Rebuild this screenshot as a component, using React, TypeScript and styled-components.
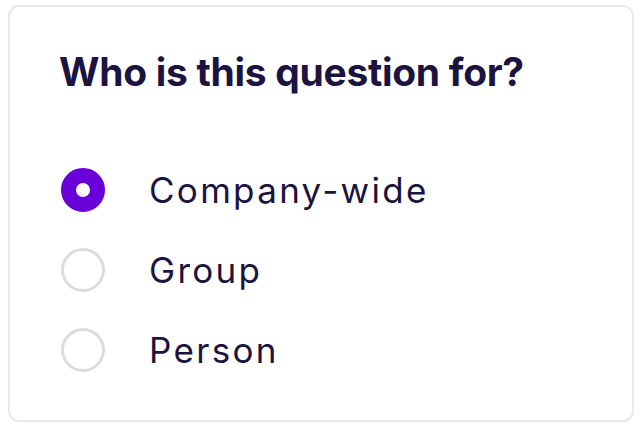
import React from 'react';
import styled, { createGlobalStyle } from 'styled-components';

const Global = createGlobalStyle`
  html, body { margin: 0; padding: 0; background: #fff; }
  body { font-family: 'Inter', 'Noto Sans', sans-serif; }
`;

const Page = styled.div`
  padding: 5px 8px 0 8px;
`;

const Card = styled.div`
  box-sizing: border-box;
  width: 626px; height: 417px;
  border: 2px solid #e9e9ec; border-radius: 11px;
  padding: 41px 0 0 51px;
  display: flex; flex-direction: column;
`;

const Title = styled.h2`
  margin: 0 0 72px -2px;
  font-size: 39px; line-height: 48px; font-weight: 700;
  color: #1b1340; letter-spacing: -0.3px;
`;

const List = styled.div`
  display: flex; flex-direction: column; gap: 36px;
`;

const Option = styled.label`
  display: flex; align-items: center; gap: 44px; cursor: pointer;
  height: 44px;
`;

const Dot = styled.span<{ $on: boolean }>`
  box-sizing: border-box; flex: 0 0 auto;
  width: 44px; height: 44px; border-radius: 50%;
  background: #fff;
  border: ${({ $on }) => ($on ? '15px solid #6a00d8' : '3px solid #dcdcdf')};
`;

const Label = styled.span`
  font-size: 35px; line-height: 44px; font-weight: 400; color: #1b1340;
  letter-spacing: 2.3px;
`;

const options = ['Company-wide', 'Group', 'Person'];

export default function App() {
  const [sel, setSel] = React.useState(0);
  return (
    <>
      <Global />
      <Page>
        <Card>
          <Title>Who is this question for?</Title>
          <List>
            {options.map((o, i) => (
              <Option key={o} onClick={() => setSel(i)}>
                <Dot $on={sel === i} />
                <Label>{o}</Label>
              </Option>
            ))}
          </List>
        </Card>
      </Page>
    </>
  );
}
